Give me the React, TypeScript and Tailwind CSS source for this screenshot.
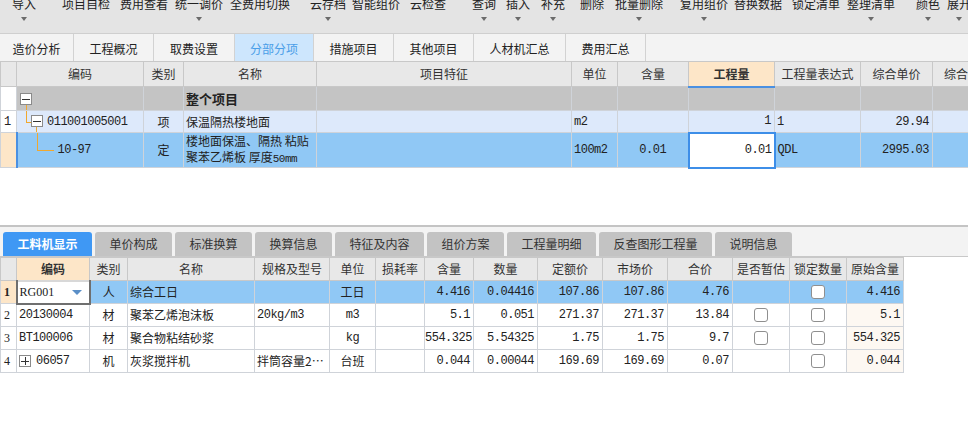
import React from "react"

type Tool = { label: string; cls: string; drop?: boolean }

const tools: Tool[] = [
  { label: "导入", cls: "ml-[10px] w-[28px]", drop: true },
  { label: "项目自检", cls: "ml-[22px] w-[52px]" },
  { label: "费用查看", cls: "ml-[6px] w-[52px]" },
  { label: "统一调价", cls: "ml-[3px] w-[52px]", drop: true },
  { label: "全费用切换", cls: "ml-[3px] w-[64px]" },
  { label: "云存档", cls: "ml-[16px] w-[40px]", drop: true },
  { label: "智能组价", cls: "ml-[2px] w-[52px]" },
  { label: "云检查", cls: "ml-[6px] w-[40px]" },
  { label: "查询", cls: "ml-[22px] w-[28px]", drop: true },
  { label: "插入", cls: "ml-[6px] w-[28px]", drop: true },
  { label: "补充", cls: "ml-[7px] w-[28px]", drop: true },
  { label: "删除", cls: "ml-[11px] w-[28px]" },
  { label: "批量删除", cls: "ml-[7px] w-[52px]", drop: true },
  { label: "复用组价", cls: "ml-[13px] w-[52px]", drop: true },
  { label: "替换数据", cls: "ml-[2px] w-[52px]" },
  { label: "锁定清单", cls: "ml-[6px] w-[52px]" },
  { label: "整理清单", cls: "ml-[3px] w-[52px]", drop: true },
  { label: "颜色", cls: "ml-[17px] w-[28px]", drop: true },
  { label: "展开", cls: "ml-[3px] w-[28px]", drop: true },
]

const pageTabs = [
  { label: "造价分析", w: "w-[74px]" },
  { label: "工程概况", w: "w-[80px]" },
  { label: "取费设置", w: "w-[81px]" },
  { label: "分部分项", w: "w-[79px]", active: true },
  { label: "措施项目", w: "w-[80px]" },
  { label: "其他项目", w: "w-[80px]" },
  { label: "人材机汇总", w: "w-[92px]" },
  { label: "费用汇总", w: "w-[80px]" },
]

const subTabs = [
  { label: "工料机显示", w: "w-[89px]", active: true },
  { label: "单价构成", w: "w-[77px]" },
  { label: "标准换算", w: "w-[77px]" },
  { label: "换算信息", w: "w-[77px]" },
  { label: "特征及内容", w: "w-[89px]" },
  { label: "组价方案", w: "w-[77px]" },
  { label: "工程量明细", w: "w-[89px]" },
  { label: "反查图形工程量", w: "w-[113px]" },
  { label: "说明信息", w: "w-[77px]" },
]

const mono = "font-['Liberation_Mono','Noto_Sans_CJK_SC',monospace] text-[11px] tracking-[-0.5px]"
const th = "border border-[#c8c8c8] bg-[#e8e8e8] font-normal text-[12px] text-[#333] whitespace-nowrap overflow-hidden"
const td = "border border-[#cfd3d9] text-[12px] text-[#222] whitespace-nowrap overflow-hidden"

function MinusBox({ plus }: { plus?: boolean }) {
  return (
    <span className="relative flex w-[12px] h-[12px] items-center justify-center border border-[#8a8a8a] bg-white">
      <span className="w-[8px] h-px bg-[#333]" />
      {plus && <span className="absolute w-px h-[8px] bg-[#333]" />}
    </span>
  )
}

function Check() {
  return <span className="mx-auto block w-[14px] h-[14px] rounded-[3px] border border-[#8f8f8f] bg-white" />
}

type MatRow = {
  no: string
  code: string
  kind: string
  name: string
  spec: string
  specCjk?: boolean
  unit: string
  unitCjk?: boolean
  qty: string
  amount: string
  quota: string
  market: string
  total: string
  est: boolean
  lock: boolean
  orig: string
}

const matRows: MatRow[] = [
  { no: "2", code: "20130004", kind: "材", name: "聚苯乙烯泡沫板", spec: "20kg/m3", unit: "m3", qty: "5.1", amount: "0.051", quota: "271.37", market: "271.37", total: "13.84", est: true, lock: true, orig: "5.1" },
  { no: "3", code: "BT100006", kind: "材", name: "聚合物粘结砂浆", spec: "", unit: "kg", qty: "554.325", amount: "5.54325", quota: "1.75", market: "1.75", total: "9.7", est: true, lock: true, orig: "554.325" },
  { no: "4", code: "06057", kind: "机", name: "灰浆搅拌机", spec: "拌筒容量2…", specCjk: true, unit: "台班", unitCjk: true, qty: "0.044", amount: "0.00044", quota: "169.69", market: "169.69", total: "0.07", est: false, lock: true, orig: "0.044" },
]

export default function App() {
  return (
    <div className="w-[968px] h-[436px] overflow-hidden bg-white font-['Noto_Sans_CJK_SC',sans-serif] text-[#222]">

      {/* toolbar */}
      <div className="h-[34px] flex items-start overflow-hidden bg-[#e4e4e4] border-b border-[#cfcfcf]">
        {tools.map(t => (
          <div key={t.label} className={`${t.cls} shrink-0 -mt-[4px] flex flex-col items-center`}>
            <span className="text-[12px] leading-[16px] whitespace-nowrap text-[#222]">{t.label}</span>
            {t.drop && (
              <span className="mt-[5px] w-0 h-0 border-x-[3px] border-t-[4px] border-x-transparent border-t-[#6b6b6b]" />
            )}
          </div>
        ))}
      </div>

      {/* page tabs */}
      <div className="h-[27px] flex bg-[#f3f3f3]">
        {pageTabs.map(t => (
          <div
            key={t.label}
            className={`${t.w} flex items-center justify-center pt-[2px] border-r border-[#d2d2d2] text-[12px] ${t.active ? "bg-[#cde6fd] text-[#4a9ee8]" : "text-[#222]"}`}
          >
            {t.label}
          </div>
        ))}
      </div>

      {/* top grid */}
      <div className="h-[164px] overflow-hidden bg-white">
        <table className="table-fixed border-collapse w-[1004px]">
          <colgroup>
            <col className="w-[16px]" />
            <col className="w-[127px]" />
            <col className="w-[40px]" />
            <col className="w-[133px]" />
            <col className="w-[255px]" />
            <col className="w-[46px]" />
            <col className="w-[71px]" />
            <col className="w-[86px]" />
            <col className="w-[86px]" />
            <col className="w-[72px]" />
            <col className="w-[72px]" />
          </colgroup>
          <thead>
            <tr className="h-[25px]">
              <th className={th} />
              <th className={th}>编码</th>
              <th className={th}>类别</th>
              <th className={th}>名称</th>
              <th className={th}>项目特征</th>
              <th className={th}>单位</th>
              <th className={th}>含量</th>
              <th className={`${th} !bg-[#fde6c8] !font-bold border-b-2 !border-b-[#4a90e2]`}>工程量</th>
              <th className={th}>工程量表达式</th>
              <th className={th}>综合单价</th>
              <th className={`${th} text-left pl-[11px]`}>综合单价</th>
            </tr>
          </thead>
          <tbody>
            <tr className="h-[24px] bg-[#c4c4c4]">
              <td className={`${td} bg-white`} />
              <td className={`${td} relative`}>
                <span className="absolute left-[3px] top-[6px]"><MinusBox /></span>
                <span className="absolute left-[9px] top-[18px] w-px h-[8px] bg-[#f0a830]" />
              </td>
              <td className={td} />
              <td className={`${td} pl-[2px] font-bold text-[13px]`}>整个项目</td>
              <td className={td} />
              <td className={td} />
              <td className={td} />
              <td className={td} />
              <td className={td} />
              <td className={td} />
              <td className={td} />
            </tr>
            <tr className="h-[22px] bg-[#dde9fb]">
              <td className={`${td} bg-white pl-[3px] ${mono}`}>1</td>
              <td className={`${td} relative pl-[30px] ${mono}`}>
                <span className="absolute left-[9px] top-0 w-px h-[11px] bg-[#f0a830]" />
                <span className="absolute left-[9px] top-[11px] w-[5px] h-px bg-[#f0a830]" />
                <span className="absolute left-[14px] top-[4px]"><MinusBox /></span>
                <span className="absolute left-[19px] top-[16px] w-px h-[8px] bg-[#f0a830]" />
                011001005001
              </td>
              <td className={`${td} text-center`}>项</td>
              <td className={`${td} pl-[2px]`}>保温隔热楼地面</td>
              <td className={td} />
              <td className={`${td} pl-[2px] ${mono}`}>m2</td>
              <td className={td} />
              <td className={`${td} text-right pr-[3px] ${mono}`}>1</td>
              <td className={`${td} pl-[2px] ${mono}`}>1</td>
              <td className={`${td} text-right pr-[3px] ${mono}`}>29.94</td>
              <td className={td} />
            </tr>
            <tr className="h-[34px] bg-[#90c8f5]">
              <td className={`${td} bg-[#fde6c8] border-r-2 !border-r-[#4a90e2]`} />
              <td className={`${td} relative pl-[40px] ${mono}`}>
                <span className="absolute left-[19px] top-0 w-px h-[17px] bg-[#f0a830]" />
                <span className="absolute left-[19px] top-[17px] w-[17px] h-px bg-[#f0a830]" />
                10-97
              </td>
              <td className={`${td} text-center`}>定</td>
              <td className={`${td} pl-[2px] leading-[16px] whitespace-normal`}>
                <div>楼地面保温、隔热 粘贴</div>
                <div>聚苯乙烯板 厚度<span className={mono}>50mm</span></div>
              </td>
              <td className={td} />
              <td className={`${td} pl-[2px] ${mono}`}>100m2</td>
              <td className={`${td} text-center ${mono}`}>0.01</td>
              <td className={`${td} bg-white border-2 !border-[#3d8ee8] text-right pr-[2px] ${mono}`}>0.01</td>
              <td className={`${td} pl-[2px] ${mono}`}>QDL</td>
              <td className={`${td} text-right pr-[3px] ${mono}`}>2995.03</td>
              <td className={td} />
            </tr>
          </tbody>
        </table>
      </div>

      {/* splitter */}
      <div className="h-[2px] bg-[#c4c4c4]" />

      {/* sub tabs */}
      <div className="h-[30px] flex items-end gap-[3px] pl-[3px] bg-[#f3f3f3] border-b border-[#c8c8c8]">
        {subTabs.map(t => (
          <div
            key={t.label}
            className={`${t.w} h-[24px] flex items-center justify-center rounded-t-[3px] text-[12px] ${t.active ? "bg-[#3f98f4] text-white font-bold" : "bg-[#c3c3c3] text-[#333]"}`}
          >
            {t.label}
          </div>
        ))}
      </div>

      {/* material grid */}
      <table className="table-fixed border-collapse w-[903px]">
        <colgroup>
          <col className="w-[16px]" />
          <col className="w-[73px]" />
          <col className="w-[38px]" />
          <col className="w-[127px]" />
          <col className="w-[75px]" />
          <col className="w-[46px]" />
          <col className="w-[49px]" />
          <col className="w-[49px]" />
          <col className="w-[64px]" />
          <col className="w-[65px]" />
          <col className="w-[65px]" />
          <col className="w-[65px]" />
          <col className="w-[57px]" />
          <col className="w-[57px]" />
          <col className="w-[57px]" />
        </colgroup>
        <thead>
          <tr className="h-[23px]">
            <th className={th} />
            <th className={`${th} !bg-[#fde6c8] !font-bold`}>编码</th>
            <th className={th}>类别</th>
            <th className={th}>名称</th>
            <th className={th}>规格及型号</th>
            <th className={th}>单位</th>
            <th className={th}>损耗率</th>
            <th className={th}>含量</th>
            <th className={th}>数量</th>
            <th className={th}>定额价</th>
            <th className={th}>市场价</th>
            <th className={th}>合价</th>
            <th className={th}>是否暂估</th>
            <th className={th}>锁定数量</th>
            <th className={th}>原始含量</th>
          </tr>
        </thead>
        <tbody>
          <tr className="h-[23px] bg-[#90c8f5]">
            <td className={`${td} bg-[#fde6c8] pl-[3px] font-bold font-['Liberation_Serif',serif] text-[12px]`}>1</td>
            <td className={`${td} relative bg-white border-2 !border-[#6f6f6f] !border-t-[#d8d8d8] pl-[2px] font-['Liberation_Serif',serif] text-[12px]`}>
              RG001
              <span className="absolute right-[7px] top-[8px] w-0 h-0 border-x-[5px] border-t-[5px] border-x-transparent border-t-[#5b8fc7]" />
            </td>
            <td className={`${td} text-center`}>人</td>
            <td className={`${td} pl-[2px]`}>综合工日</td>
            <td className={td} />
            <td className={`${td} text-center`}>工日</td>
            <td className={td} />
            <td className={`${td} text-right pr-[3px] ${mono}`}>4.416</td>
            <td className={`${td} text-right pr-[3px] ${mono}`}>0.04416</td>
            <td className={`${td} text-right pr-[3px] ${mono}`}>107.86</td>
            <td className={`${td} text-right pr-[3px] ${mono}`}>107.86</td>
            <td className={`${td} text-right pr-[3px] ${mono}`}>4.76</td>
            <td className={td} />
            <td className={td}><Check /></td>
            <td className={`${td} text-right pr-[3px] ${mono}`}>4.416</td>
          </tr>
          {matRows.map(r => (
            <tr key={r.no} className="h-[23px] bg-white">
              <td className={`${td} pl-[3px] font-['Liberation_Serif',serif] text-[12px]`}>{r.no}</td>
              <td className={`${td} pl-[2px] ${mono}`}>
                {r.no === "4" ? (
                  <span className="flex items-center gap-[5px]"><MinusBox plus />{r.code}</span>
                ) : r.code}
              </td>
              <td className={`${td} text-center`}>{r.kind}</td>
              <td className={`${td} pl-[2px]`}>{r.name}</td>
              <td className={`${td} pl-[2px] ${r.specCjk ? "" : mono}`}>{r.spec}</td>
              <td className={`${td} text-center ${r.unitCjk ? "" : mono}`}>{r.unit}</td>
              <td className={td} />
              <td className={`${td} text-right pr-[3px] ${mono}`}>{r.qty}</td>
              <td className={`${td} text-right pr-[3px] ${mono}`}>{r.amount}</td>
              <td className={`${td} text-right pr-[3px] ${mono}`}>{r.quota}</td>
              <td className={`${td} text-right pr-[3px] ${mono}`}>{r.market}</td>
              <td className={`${td} text-right pr-[3px] ${mono}`}>{r.total}</td>
              <td className={td}>{r.est && <Check />}</td>
              <td className={td}>{r.lock && <Check />}</td>
              <td className={`${td} bg-[#fdf8f2] text-right pr-[3px] ${mono}`}>{r.orig}</td>
            </tr>
          ))}
        </tbody>
      </table>

    </div>
  )
}
